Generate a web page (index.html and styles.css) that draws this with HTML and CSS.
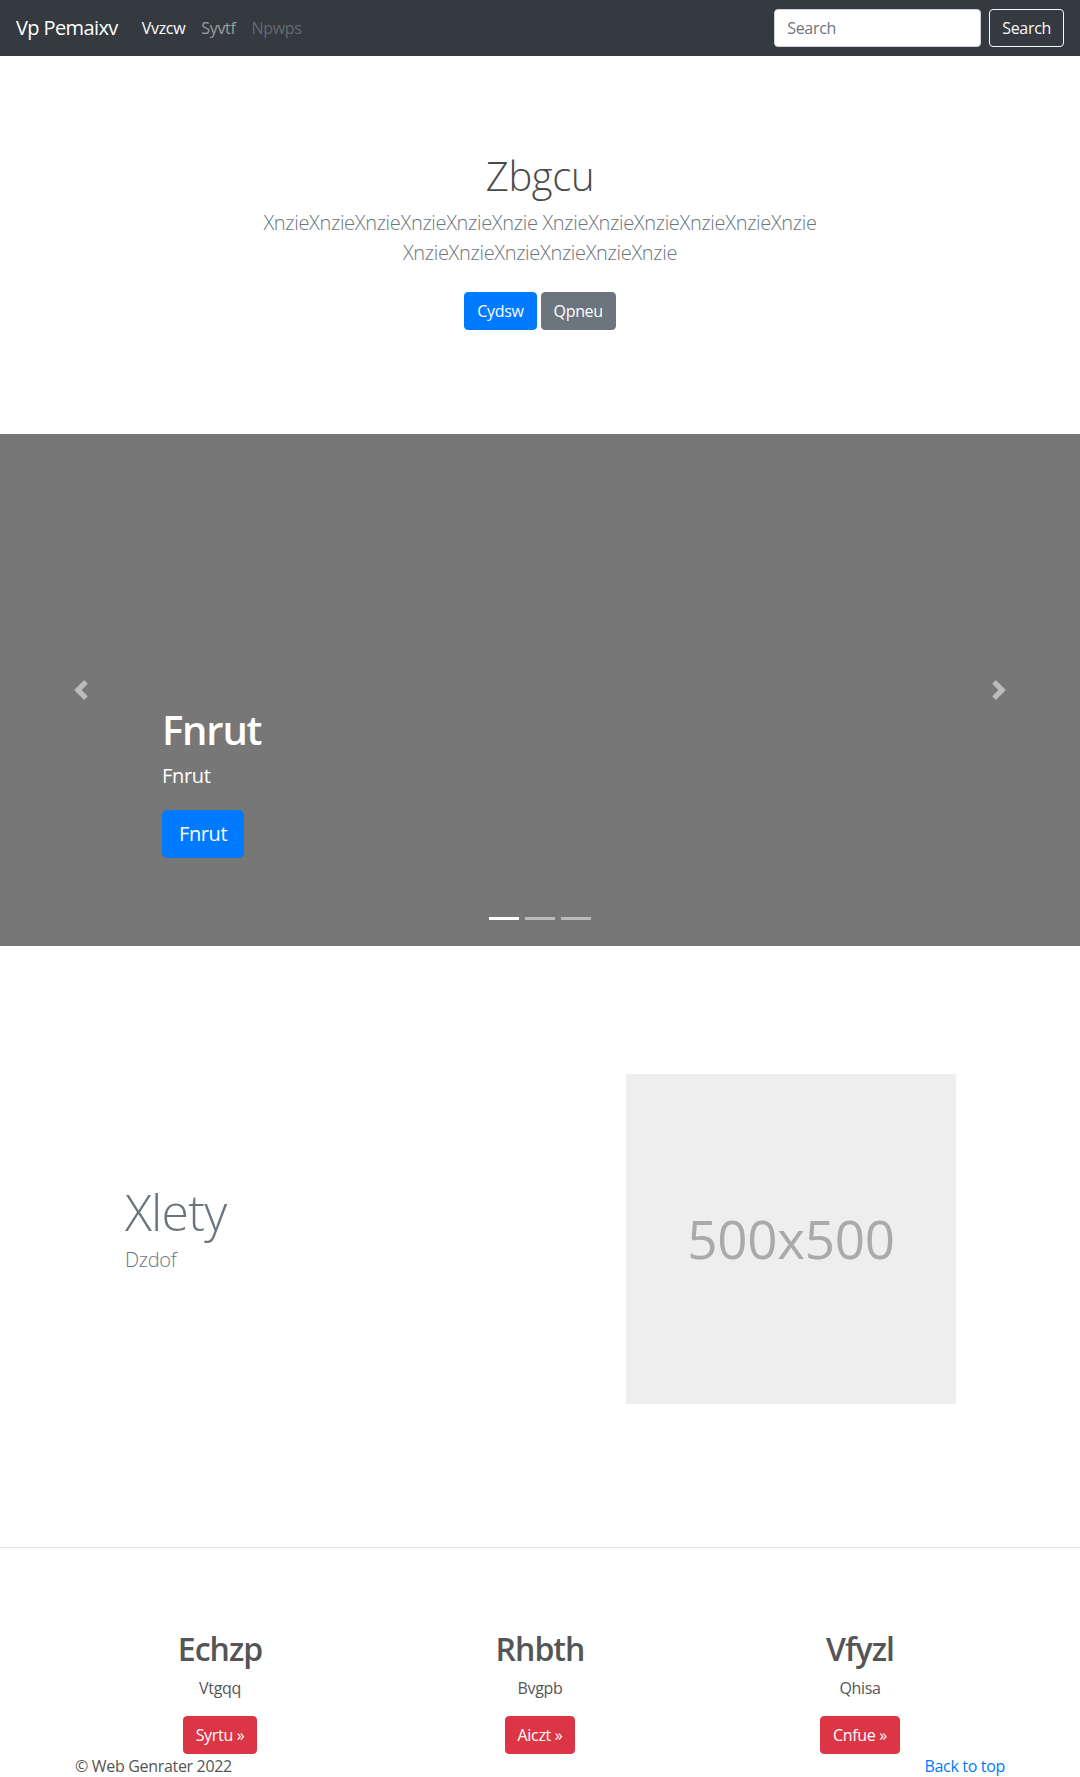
FILE: index.html
```html
<!DOCTYPE html>
<html lang="en">
<head>
<meta charset="utf-8">
<title>Vp Pemaixv</title>
<link rel="stylesheet" href="styles.css">
</head>
<body>
<header>
  <nav class="navbar">
    <a class="brand" href="#">Vp Pemaixv</a>
    <ul class="nav">
      <li><a class="nav-link active" href="#">Vvzcw</a></li>
      <li><a class="nav-link" href="#">Syvtf</a></li>
      <li><a class="nav-link disabled" href="#">Npwps</a></li>
    </ul>
    <form class="search">
      <input class="search-input" type="text" placeholder="Search" aria-label="Search">
      <button class="btn btn-outline-light" type="button">Search</button>
    </form>
  </nav>
</header>

<main>
  <section class="jumbotron">
    <h1 class="jumbotron-heading">Zbgcu</h1>
    <p class="lead">XnzieXnzieXnzieXnzieXnzieXnzie XnzieXnzieXnzieXnzieXnzieXnzie XnzieXnzieXnzieXnzieXnzieXnzie</p>
    <p class="jumbo-actions">
      <a href="#" class="btn btn-primary">Cydsw</a>
      <a href="#" class="btn btn-secondary">Qpneu</a>
    </p>
  </section>

  <section class="carousel">
    <div class="slide">
      <div class="caption">
        <h1 class="caption-title">Fnrut</h1>
        <p class="caption-text">Fnrut</p>
        <p class="caption-action"><a href="#" class="btn btn-lg btn-primary">Fnrut</a></p>
      </div>
    </div>
    <ol class="indicators">
      <li class="active"></li>
      <li></li>
      <li></li>
    </ol>
    <a class="control control-prev" href="#" aria-label="Previous">
      <svg class="control-icon" viewBox="0 0 8 8" width="20" height="20"><path d="M5.25 0l-4 4 4 4 1.5-1.5L4.25 4l2.5-2.5L5.25 0z"/></svg>
    </a>
    <a class="control control-next" href="#" aria-label="Next">
      <svg class="control-icon" viewBox="0 0 8 8" width="20" height="20"><path d="M2.75 0l-1.5 1.5L3.75 4l-2.5 2.5L2.75 8l4-4-4-4z"/></svg>
    </a>
  </section>

  <section class="featurette">
    <div class="featurette-text">
      <h2 class="featurette-heading">Xlety</h2>
      <p class="featurette-lead">Dzdof</p>
    </div>
    <div class="featurette-image"><span>500x500</span></div>
  </section>

  <hr class="divider">

  <section class="marketing">
    <div class="col">
      <h2 class="col-title">Echzp</h2>
      <p class="col-text">Vtgqq</p>
      <p class="col-action"><a class="btn btn-danger" href="#">Syrtu &raquo;</a></p>
    </div>
    <div class="col">
      <h2 class="col-title">Rhbth</h2>
      <p class="col-text">Bvgpb</p>
      <p class="col-action"><a class="btn btn-danger" href="#">Aiczt &raquo;</a></p>
    </div>
    <div class="col">
      <h2 class="col-title">Vfyzl</h2>
      <p class="col-text">Qhisa</p>
      <p class="col-action"><a class="btn btn-danger" href="#">Cnfue &raquo;</a></p>
    </div>
  </section>
</main>

<footer class="footer">
  <p class="copyright">&copy; Web Genrater 2022</p>
  <p class="back"><a href="#">Back to top</a></p>
</footer>
</body>
</html>
```

FILE: styles.css
```css
* { box-sizing: border-box; }

html, body {
  margin: 0;
  padding: 0;
}

body {
  font-family: "Open Sans", "Noto Sans", "DejaVu Sans", sans-serif;
  font-size: 16px;
  line-height: 1.5;
  letter-spacing: -0.02em;
  color: #212529;
  background: #fff;
}

a { text-decoration: none; }

/* Buttons */
.btn {
  display: inline-block;
  padding: 6px 12px;
  font-size: 16px;
  line-height: 1.5;
  font-weight: 400;
  letter-spacing: -0.02em;
  border: 1px solid transparent;
  border-radius: 4px;
  color: #fff;
  font-family: inherit;
  cursor: pointer;
  white-space: nowrap;
}
.btn-primary { background: #007bff; border-color: #007bff; }
.btn-secondary { background: #6c757d; border-color: #6c757d; }
.btn-danger { background: #dc3545; border-color: #dc3545; }
.btn-outline-light { background: transparent; border-color: #f8f9fa; color: #f8f9fa; }
.btn-lg {
  padding: 8px 16px;
  font-size: 20px;
  line-height: 1.5;
  border-radius: 5px;
}

/* Navbar */
.navbar {
  display: flex;
  align-items: center;
  height: 56px;
  padding: 8px 16px;
  background: #343a40;
}
.brand {
  font-size: 20px;
  line-height: 30px;
  padding: 5px 0;
  margin-right: 16px;
  color: #fff;
  white-space: nowrap;
  letter-spacing: -0.03em;
}
.nav {
  display: flex;
  list-style: none;
  margin: 0;
  padding: 0;
}
.nav-link {
  display: block;
  padding: 8px;
  color: rgba(255, 255, 255, 0.5);
}
.nav-link.active { color: #fff; }
.nav-link.disabled { color: rgba(255, 255, 255, 0.25); }
.search {
  margin: 0 0 0 auto;
  display: flex;
  align-items: center;
  gap: 8px;
}
.search-input {
  width: 207px;
  height: 38px;
  padding: 6px 12px;
  font-family: inherit;
  font-size: 16px;
  line-height: 1.5;
  letter-spacing: -0.02em;
  color: #495057;
  background: #fff;
  border: 1px solid #ced4da;
  border-radius: 4px;
}
.search-input::placeholder { color: #6c757d; }

/* Jumbotron */
.jumbotron {
  padding: 96px 15px;
  text-align: center;
}
.jumbotron-heading {
  margin: 0 0 8px;
  font-size: 40px;
  line-height: 1.2;
  font-weight: 300;
  color: #4a4a4a;
}
.lead {
  max-width: 620px;
  margin: 0 auto 16px;
  font-size: 20px;
  line-height: 1.5;
  font-weight: 300;
  color: #6c757d;
}
.jumbo-actions {
  display: flex;
  justify-content: center;
  gap: 4px;
  margin: 0;
  padding: 8px 0;
}

/* Carousel */
.carousel {
  position: relative;
  height: 512px;
  margin-bottom: 64px;
  background: #777;
  overflow: hidden;
}
.slide {
  height: 100%;
}
.caption {
  position: absolute;
  left: 15%;
  right: 15%;
  bottom: 48px;
  padding: 20px 0;
  color: #fff;
  text-align: left;
  z-index: 10;
}
.caption-title {
  margin: 0 0 8px;
  font-size: 40px;
  line-height: 1.2;
  font-weight: 600;
  letter-spacing: -0.03em;
}
.caption-text {
  margin: 0 0 20px;
  font-size: 20px;
  line-height: 1.4;
}
.caption-action {
  display: flex;
  margin: 0 0 20px;
}
.indicators {
  position: absolute;
  left: 15%;
  right: 15%;
  bottom: 16px;
  display: flex;
  justify-content: center;
  margin: 0;
  padding: 0;
  list-style: none;
  z-index: 15;
}
.indicators li {
  box-sizing: content-box;
  width: 30px;
  height: 3px;
  margin: 0 3px;
  background: #fff;
  background-clip: padding-box;
  border-top: 10px solid transparent;
  border-bottom: 10px solid transparent;
  opacity: 0.5;
}
.indicators li.active { opacity: 1; }
.control {
  position: absolute;
  top: 0;
  bottom: 0;
  width: 15%;
  display: flex;
  align-items: center;
  justify-content: center;
  opacity: 0.5;
}
.control-prev { left: 0; }
.control-next { right: 0; }
.control-icon { fill: #fff; display: block; }

/* Featurette */
.featurette {
  width: 960px;
  margin: 0 auto;
  padding: 64px 0 63px;
  display: flex;
  align-items: center;
}
.featurette-text {
  flex: 1;
  padding-left: 65px;
}
.featurette-heading {
  margin: 0 0 8px;
  font-size: 50px;
  line-height: 1;
  font-weight: 300;
  letter-spacing: -0.8px;
  color: #6c757d;
}
.featurette-lead {
  margin: 0 0 16px;
  font-size: 20px;
  line-height: 1.5;
  font-weight: 300;
  color: #6c757d;
}
.featurette-image {
  width: 330px;
  height: 330px;
  margin-right: 64px;
  background: #eee;
  color: #aaa;
  font-size: 53px;
  display: flex;
  align-items: center;
  justify-content: center;
}

.divider {
  margin: 80px 0;
  border: 0;
  border-top: 1px solid rgba(0, 0, 0, 0.1);
  height: 0;
}

/* Marketing */
.marketing {
  width: 960px;
  margin: 0 auto;
  padding-top: 2px;
  display: grid;
  grid-template-columns: repeat(3, 1fr);
  text-align: center;
}
.col {
  padding: 0 15px;
}
.col-title {
  margin: 0 0 8px;
  font-size: 32px;
  line-height: 1.2;
  font-weight: 600;
  letter-spacing: -0.03em;
  color: #555;
}
.col-text {
  margin: 0 12px 16px;
  color: #555;
}
.col-action {
  margin: 0;
  display: flex;
  justify-content: center;
}

/* Footer */
.footer {
  width: 930px;
  margin: 0 auto;
  display: flex;
  justify-content: space-between;
  color: #555;
}
.footer p { margin: 0 0 16px; }
.back a { color: #007bff; }
```
